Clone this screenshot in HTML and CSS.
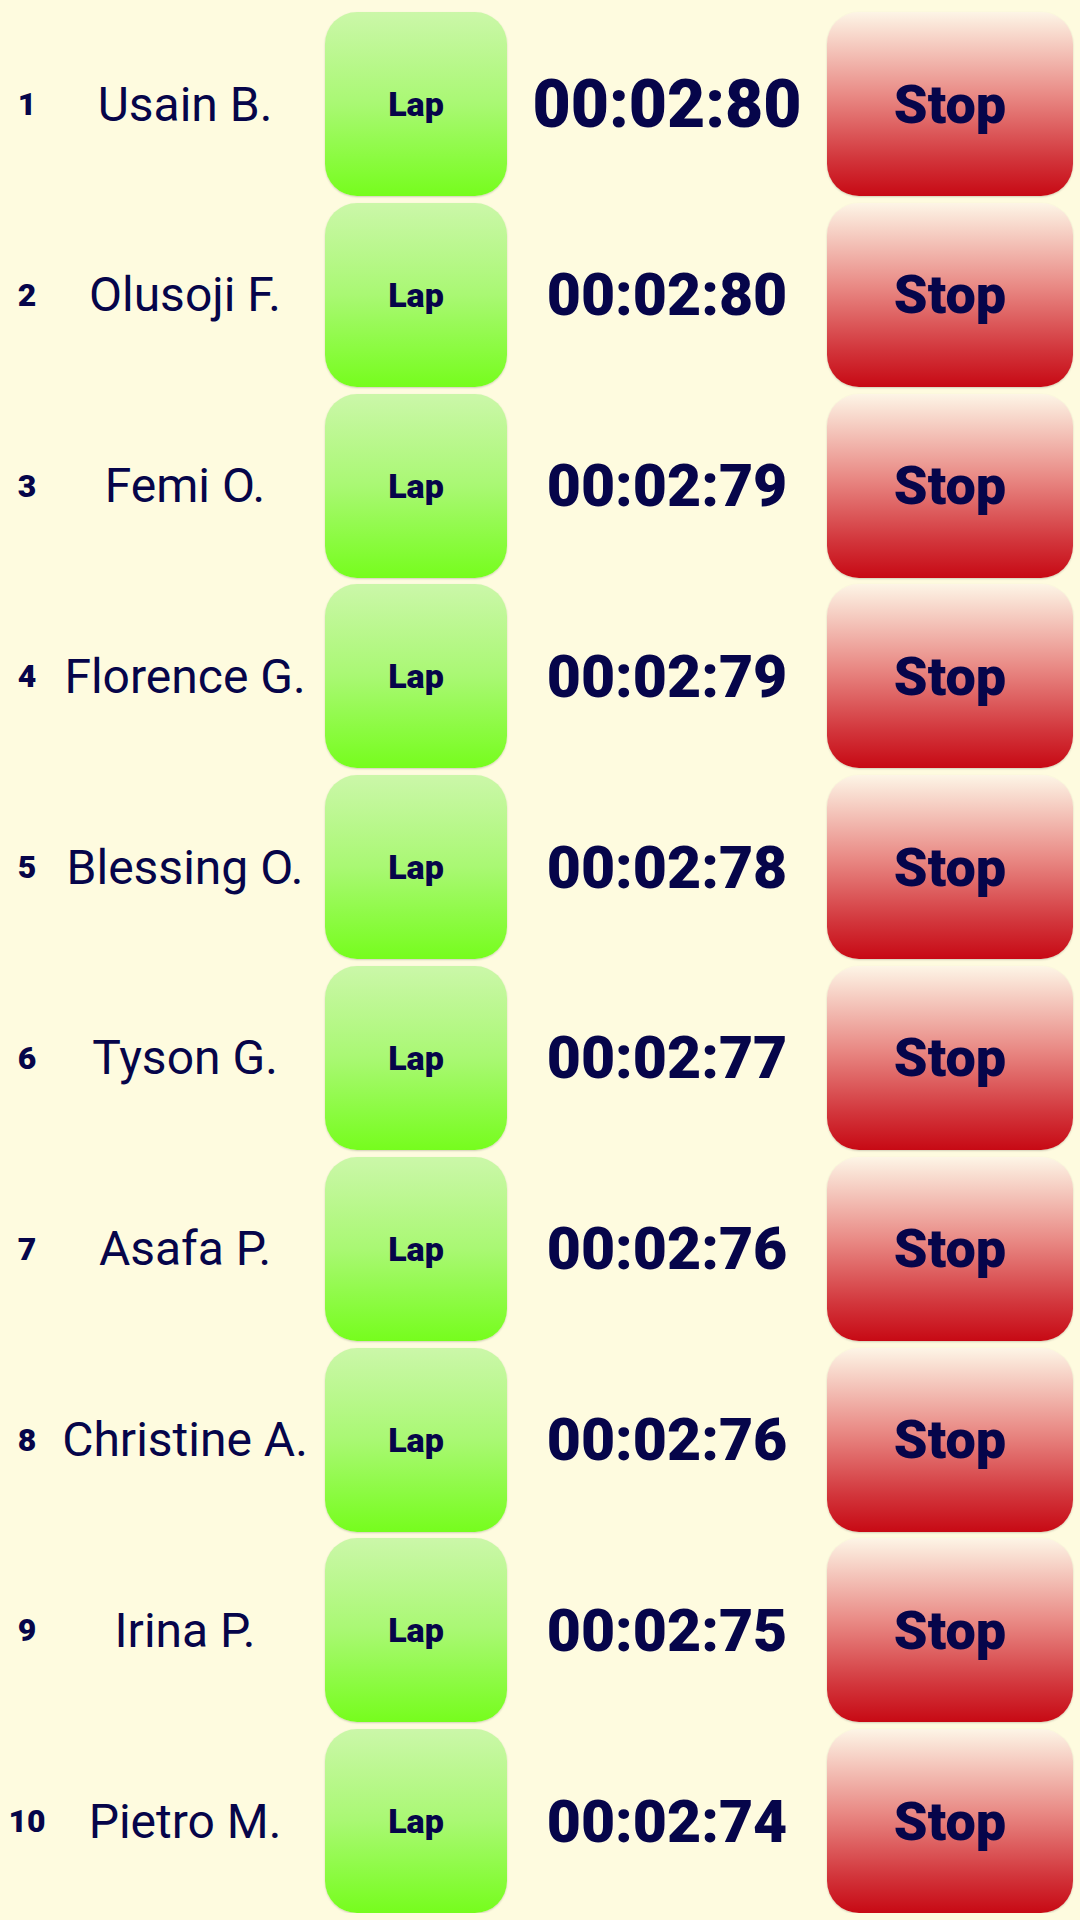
FILE: index.html
```html
<!DOCTYPE html>
<html lang="en">
<head>
  <meta charset="UTF-8">
  <title>Race Timer</title>
  <link rel="stylesheet" href="styles.css">
</head>
<body>
  <div class="board">
    <div class="runner">
      <span class="pos">1</span>
      <span class="name">Usain B.</span>
      <button class="lap">Lap</button>
      <span class="time lead">00:02:80</span>
      <button class="stop">Stop</button>
    </div>
    <div class="runner">
      <span class="pos">2</span>
      <span class="name">Olusoji F.</span>
      <button class="lap">Lap</button>
      <span class="time">00:02:80</span>
      <button class="stop">Stop</button>
    </div>
    <div class="runner">
      <span class="pos">3</span>
      <span class="name">Femi O.</span>
      <button class="lap">Lap</button>
      <span class="time">00:02:79</span>
      <button class="stop">Stop</button>
    </div>
    <div class="runner">
      <span class="pos">4</span>
      <span class="name">Florence G.</span>
      <button class="lap">Lap</button>
      <span class="time">00:02:79</span>
      <button class="stop">Stop</button>
    </div>
    <div class="runner">
      <span class="pos">5</span>
      <span class="name">Blessing O.</span>
      <button class="lap">Lap</button>
      <span class="time">00:02:78</span>
      <button class="stop">Stop</button>
    </div>
    <div class="runner">
      <span class="pos">6</span>
      <span class="name">Tyson G.</span>
      <button class="lap">Lap</button>
      <span class="time">00:02:77</span>
      <button class="stop">Stop</button>
    </div>
    <div class="runner">
      <span class="pos">7</span>
      <span class="name">Asafa P.</span>
      <button class="lap">Lap</button>
      <span class="time">00:02:76</span>
      <button class="stop">Stop</button>
    </div>
    <div class="runner">
      <span class="pos">8</span>
      <span class="name">Christine A.</span>
      <button class="lap">Lap</button>
      <span class="time">00:02:76</span>
      <button class="stop">Stop</button>
    </div>
    <div class="runner">
      <span class="pos">9</span>
      <span class="name">Irina P.</span>
      <button class="lap">Lap</button>
      <span class="time">00:02:75</span>
      <button class="stop">Stop</button>
    </div>
    <div class="runner">
      <span class="pos">10</span>
      <span class="name">Pietro M.</span>
      <button class="lap">Lap</button>
      <span class="time">00:02:74</span>
      <button class="stop">Stop</button>
    </div>
  </div>
</body>
</html>
```

FILE: styles.css
```css
body {
  margin: 0;
  background: #fefbdf;
  color: #06054a;
  font-family: Roboto, "Liberation Sans", sans-serif;
}
.board {
  display: flex;
  flex-direction: column;
  gap: 6.8px;
  padding: 12px 7px 0 0;
}
.runner {
  display: flex;
  align-items: center;
  height: 184px;
}
.pos {
  width: 54px;
  text-align: center;
  font-weight: 900;
  font-size: 32px;
}
.name {
  width: 262px;
  margin-right: 9px;
  text-align: center;
  font-size: 48px;
  white-space: nowrap;
}
button {
  height: 184px;
  border: none;
  border-radius: 32px;
  color: #06054a;
  font-family: inherit;
  font-weight: 900;
  box-shadow: 0 1px 2px rgba(0, 0, 0, 0.18);
  cursor: pointer;
}
.lap {
  width: 182px;
  font-size: 34px;
  background: linear-gradient(#cbf7a9, #a9f873 50%, #76fd1d);
}
.stop {
  width: 246px;
  font-size: 54px;
  background: linear-gradient(#fdf5e6, #e98a85 45%, #d2353b 80%, #c70914);
}
.time {
  width: 320px;
  text-align: center;
  font-weight: 900;
  font-size: 59px;
}
.time.lead { font-size: 66px; }
```
